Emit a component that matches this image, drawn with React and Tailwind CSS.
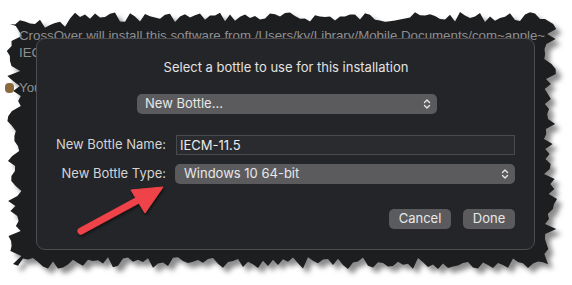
import React from "react";

// deterministic jagged outline for the torn-paper frame
function tornPoints() {
  let seed = 7;
  const rnd = () => {
    seed = (seed * 9301 + 49297) % 233280;
    return seed / 233280;
  };
  const j = (a) => (rnd() * 2 - 1) * a;
  const pts = [];
  for (let x = 10; x <= 548; x += 5) pts.push([x, (x < 70 ? 24 : 17) + j(5)]);
  for (let y = 24; y <= 256; y += 5) pts.push([551 + j(7), y]);
  for (let x = 548; x >= 10; x -= 5) pts.push([x, 263 + j(6)]);
  for (let y = 256; y >= 24; y -= 5) pts.push([14 + j(8), y]);
  return pts.map((p) => p.map((v) => v.toFixed(1)).join(",")).join(" ");
}

const TORN = tornPoints();

function Chevrons() {
  return (
    <svg width="8" height="12" viewBox="0 0 8 12" fill="none" stroke="#e6e6e6" strokeWidth="1.4" strokeLinecap="round" strokeLinejoin="round">
      <path d="M1.5 4.5 L4 2 L6.5 4.5" />
      <path d="M1.5 7.5 L4 10 L6.5 7.5" />
    </svg>
  );
}

function Popup({ label, className = "" }) {
  return (
    <div className={`flex items-center justify-between h-[20px] rounded-[5px] bg-[#5b5b5e] pl-[8px] pr-[6px] text-[13px] text-[#e8e8e8] ${className}`}>
      <span>{label}</span>
      <Chevrons />
    </div>
  );
}

export default function App() {
  return (
    <div className="relative w-[572px] h-[285px] overflow-hidden bg-white font-['Inter',sans-serif]">
      {/* torn frame */}
      <svg className="absolute inset-0" width="572" height="285">
        <defs>
          <filter id="blur" x="-10%" y="-10%" width="120%" height="120%">
            <feGaussianBlur stdDeviation="2.5" />
          </filter>
        </defs>
        <polygon points={TORN} fill="#8c8c8c" transform="translate(5 5)" filter="url(#blur)" />
        <polygon points={TORN} fill="#1d1e20" />
      </svg>

      {/* background window text */}
      <div className="relative w-[552px] whitespace-nowrap pt-[27px] pl-[19px] text-[13.3px] leading-[17px] text-[#8f8f92] font-['Liberation_Sans',Arial,sans-serif]">
        <p>CrossOver will install this software from /Users/ky/Library/Mobile Documents/com~apple~</p>
        <p>IECM-11.5.exe</p>
        <p className="mt-[18px] relative">
          <span className="absolute left-[-14px] top-[4px] w-[9px] h-[10px] rounded-sm bg-[#8a6a3c]" />
          You can also select an existing bottle.
        </p>
      </div>

      {/* sheet dialog */}
      <div className="absolute left-[36px] top-[38px] w-[499px] h-[212px] rounded-[9px] border border-[#4d4d50] bg-[#242528] pt-[20px] pl-[20px] pr-[19px]">
        <p className="text-center text-[13px] leading-[16px] text-[#e2e2e2]">Select a bottle to use for this installation</p>

        <Popup label="New Bottle..." className="w-[300px] ml-[80px] mt-[19px]" />

        <div className="mt-[21px] flex items-center">
          <span className="w-[109px] shrink-0 whitespace-nowrap flex justify-end text-[13px] text-[#d4d4d4]">New Bottle Name:</span>
          <div className="ml-[10px] flex-1 h-[20px] border border-[#4a4b4e] bg-[#2a2b2e] pl-[3px] text-[13px] leading-[18px] text-[#ececec]">
            IECM-11.5
          </div>
        </div>

        <div className="mt-[9px] flex items-center">
          <span className="w-[109px] shrink-0 whitespace-nowrap flex justify-end text-[13px] text-[#d4d4d4]">New Bottle Type:</span>
          <Popup label="Windows 10 64-bit" className="ml-[9px] flex-1 pl-[9px]" />
        </div>

        <div className="mt-[25px] flex justify-end gap-[12px]">
          <button className="h-[20px] w-[62px] rounded-[5px] bg-[#5b5b5e] text-[13px] text-[#e8e8e8]">Cancel</button>
          <button className="h-[20px] w-[52px] rounded-[5px] bg-[#5b5b5e] text-[13px] text-[#e8e8e8]">Done</button>
        </div>
      </div>

      {/* annotation arrow */}
      <svg className="absolute inset-0 pointer-events-none" width="572" height="285">
        <defs>
          <filter id="ashadow" x="-20%" y="-20%" width="140%" height="140%">
            <feDropShadow dx="1" dy="2" stdDeviation="1.5" floodColor="#000" floodOpacity="0.5" />
          </filter>
        </defs>
        <g filter="url(#ashadow)" fill="#ef4248" stroke="#ef4248">
          <line x1="81" y1="231" x2="140" y2="199" strokeWidth="7" strokeLinecap="round" />
          <polygon points="163,187 131,190 145,213" strokeWidth="1" strokeLinejoin="round" />
        </g>
      </svg>
    </div>
  );
}
